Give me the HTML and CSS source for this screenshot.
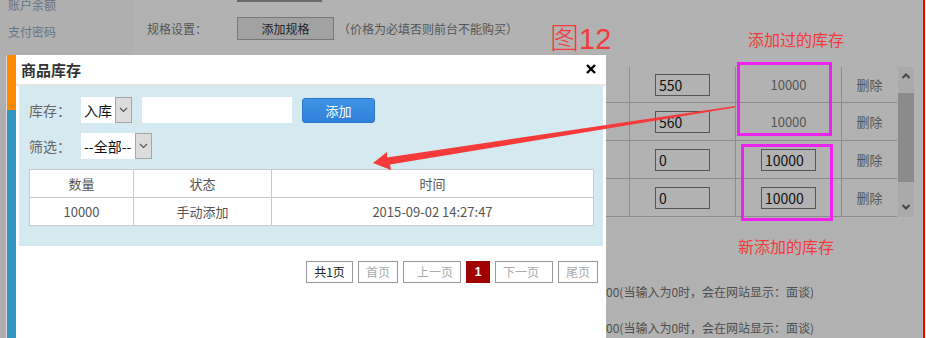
FILE: index.html
```html
<!DOCTYPE html>
<html lang="zh-CN">
<head>
    <meta charset="UTF-8">
    <title>商品库存</title>
    <link rel="stylesheet" href="styles.css">
</head>
<body>
    <div class="page">
        <!-- left menu -->
        <div class="sidebar">
            <div class="side-item side-first">账户余额</div>
            <div class="side-item">支付密码</div>
        </div>

        <!-- product edit form (dimmed behind the dialog) -->
        <div class="main">
            <div class="top-input"></div>
            <div class="spec-row">
                <span class="spec-label">规格设置：</span>
                <span class="spec-btn">添加规格</span>
                <span class="spec-note">（价格为必填否则前台不能购买）</span>
            </div>

            <div class="spec-wrap">
                <table class="spec-table">
                    <tr class="first">
                        <td class="c-name"></td>
                        <td class="c-price"><span class="field">550</span></td>
                        <td class="c-stock">10000</td>
                        <td class="c-del">删除</td>
                    </tr>
                    <tr>
                        <td class="c-name"></td>
                        <td class="c-price"><span class="field">560</span></td>
                        <td class="c-stock">10000</td>
                        <td class="c-del">删除</td>
                    </tr>
                    <tr>
                        <td class="c-name"></td>
                        <td class="c-price"><span class="field">0</span></td>
                        <td class="c-stock"><span class="field">10000</span></td>
                        <td class="c-del">删除</td>
                    </tr>
                    <tr>
                        <td class="c-name"></td>
                        <td class="c-price"><span class="field">0</span></td>
                        <td class="c-stock"><span class="field">10000</span></td>
                        <td class="c-del">删除</td>
                    </tr>
                </table>
                <div class="scrollbar">
                    <div class="sb-btn">
                        <svg width="16" height="18" viewBox="0 0 16 18"><path d="M4.5 11 L8 7.5 L11.5 11" fill="none" stroke="#444" stroke-width="2"/></svg>
                    </div>
                    <div class="sb-track"><div class="sb-thumb"></div></div>
                    <div class="sb-btn">
                        <svg width="16" height="17" viewBox="0 0 16 17"><path d="M4.5 6 L8 9.5 L11.5 6" fill="none" stroke="#444" stroke-width="2"/></svg>
                    </div>
                </div>
            </div>

            <div class="hint hint-first">00(当输入为0时，会在网站显示：面谈)</div>
            <div class="hint">00(当输入为0时，会在网站显示：面谈)</div>
        </div>
    </div>

    <!-- stock dialog -->
    <div class="modal">
        <div class="modal-strip"></div>
        <div class="modal-body">
            <div class="modal-head">
                <span class="modal-title">商品库存</span>
                <svg class="modal-close" width="10" height="10" viewBox="0 0 10 10"><path d="M1 1 L9 9 M9 1 L1 9" stroke="#000" stroke-width="2.4"/></svg>
            </div>
            <div class="panel">
                <div class="form-row">
                    <span class="form-label">库存：</span>
                    <span class="select sel-type">
                        <span class="sel-text">入库</span>
                        <span class="sel-arrow"><svg width="9" height="6" viewBox="0 0 9 6"><path d="M1 1 L4.5 4.5 L8 1" fill="none" stroke="#555" stroke-width="1.2"/></svg></span>
                    </span>
                    <span class="text-input"></span>
                    <span class="add-btn">添加</span>
                </div>
                <div class="form-row row-filter">
                    <span class="form-label">筛选：</span>
                    <span class="select sel-filter">
                        <span class="sel-text">--全部--</span>
                        <span class="sel-arrow"><svg width="9" height="6" viewBox="0 0 9 6"><path d="M1 1 L4.5 4.5 L8 1" fill="none" stroke="#555" stroke-width="1.2"/></svg></span>
                    </span>
                </div>
                <table class="log-table">
                    <tr>
                        <th class="l-qty">数量</th>
                        <th class="l-state">状态</th>
                        <th>时间</th>
                    </tr>
                    <tr>
                        <td>10000</td>
                        <td>手动添加</td>
                        <td>2015-09-02 14:27:47</td>
                    </tr>
                </table>
            </div>
            <div class="pager">
                <span class="pg pg-total">共1页</span>
                <span class="pg pg-2">首页</span>
                <span class="pg pg-prev">上一页</span>
                <span class="pg pg-cur">1</span>
                <span class="pg pg-next">下一页</span>
                <span class="pg pg-2">尾页</span>
            </div>
        </div>
    </div>

    <!-- screenshot annotations -->
    <div class="note-fig"><span class="fig-char">图</span>12</div>
    <div class="note-old">添加过的库存</div>
    <div class="note-new">新添加的库存</div>
    <div class="mark mark-old"></div>
    <div class="mark mark-new"></div>
    <svg class="arrow" width="926" height="338" viewBox="0 0 926 338">
        <polygon points="373,163 387,152 387,157.5 735,106 735,107.5 390,164.5 391,170" fill="#f53a3a"/>
    </svg>
</body>
</html>
```

FILE: styles.css
```css
body {
    margin: 0;
    width: 926px;
    height: 338px;
    overflow: hidden;
    position: relative;
    background: #fff;
    font-family: "Noto Sans CJK SC", "Liberation Sans", sans-serif;
    font-size: 12px;
    color: #555;
}
.page {
    display: flex;
    width: 925px;
    height: 338px;
    background: #b2b2b2;
}
.sidebar {
    width: 133px;
    background: #afafaf;
}
.side-item {
    height: 27px;
    line-height: 27px;
    padding-left: 8px;
    font-size: 12px;
    color: #647487;
}
.side-first {
    margin-top: -9px;
}
.main {
    flex: 1;
    border-right: 2px solid #f00;
}
.top-input {
    margin-left: 104px;
    width: 85px;
    height: 0;
    border-bottom: 2px solid #6a6a6a;
}
.spec-row {
    display: flex;
    align-items: center;
    margin-top: 15px;
    height: 23px;
    padding-left: 14px;
}
.spec-label {
    width: 90px;
    color: #555;
}
.spec-btn {
    width: 95px;
    height: 21px;
    line-height: 21px;
    text-align: center;
    background: #a2a2a2;
    border: 1px solid #787878;
    color: #222;
}
.spec-note {
    margin-left: 4px;
    color: #555;
}
.spec-wrap {
    display: flex;
    justify-content: flex-end;
    margin-top: 27px;
    margin-right: 9px;
}
.spec-table {
    border-collapse: collapse;
}
.spec-table td {
    height: 37px;
    padding: 0;
    border-left: 1px solid #8d8d8d;
    border-bottom: 1px solid #8d8d8d;
    text-align: center;
    font-size: 13px;
    color: #555;
}
.spec-table tr.first td {
    height: 35px;
}
.c-name { width: 200px; }
.c-price { width: 105px; }
.c-stock { width: 105px; }
.c-del { width: 55px; font-size: 12px; }
.field {
    display: inline-block;
    width: 50px;
    height: 20px;
    line-height: 20px;
    border: 1px solid #555;
    padding-left: 3px;
    text-align: left;
    font-size: 14px;
    color: #111;
    vertical-align: middle;
}
.scrollbar {
    width: 16px;
    margin-left: 1px;
    display: flex;
    flex-direction: column;
    background: #aaa;
}
.sb-btn {
    height: 18px;
    display: flex;
}
.sb-track {
    flex: 1;
    padding: 8px 0 0;
}
.sb-thumb {
    height: 89px;
    background: #8b8b8b;
}
.hint {
    height: 36px;
    line-height: 36px;
    padding-left: 473px;
    font-size: 12px;
    color: #4e4e4e;
}
.hint-first {
    margin-top: 57px;
}

/* dialog */
.modal {
    position: absolute;
    left: 6px;
    top: 55px;
    width: 599px;
    height: 290px;
    display: flex;
    background: #fff;
    border-left: 1px solid #dcdcdc;
}
.modal-strip {
    width: 9px;
    background: linear-gradient(#ff8a00 0, #ff8a00 55px, #3196bd 55px);
}
.modal-body {
    flex: 1;
}
.modal-head {
    height: 29px;
    display: flex;
    align-items: center;
    justify-content: space-between;
    padding: 0 10px 0 5px;
    border-bottom: 2px solid #e6e6e6;
}
.modal-title {
    font-size: 15px;
    font-weight: bold;
    color: #333;
}
.modal-close {
    margin-bottom: 2px;
}
.panel {
    margin: 0 3px;
    height: 149px;
    padding: 11px 0 0 10px;
    background: #d5e9f1;
}
.form-row {
    display: flex;
    align-items: center;
    height: 26px;
}
.row-filter {
    margin-top: 10px;
}
.form-label {
    width: 52px;
    font-size: 14px;
    color: #666;
}
.select {
    display: flex;
    height: 26px;
    background: #fff;
}
.sel-text {
    line-height: 26px;
    padding-left: 3px;
    font-size: 14px;
    color: #111;
}
.sel-type .sel-text { width: 31px; }
.sel-filter .sel-text { width: 51px; }
.sel-arrow {
    width: 15px;
    height: 24px;
    border: 1px solid #a6a6a6;
    background: #dcdcdc;
    display: flex;
    align-items: center;
    justify-content: center;
}
.text-input {
    width: 150px;
    height: 26px;
    margin-left: 10px;
    background: #fff;
}
.add-btn {
    width: 71px;
    height: 23px;
    line-height: 23px;
    margin-left: 10px;
    text-align: center;
    color: #fff;
    font-size: 13px;
    background: linear-gradient(#4094e6, #2f80d8);
    border: 1px solid #2b76c8;
    border-radius: 3px;
}
.log-table {
    margin-top: 10px;
    width: 565px;
    border-collapse: collapse;
    background: #fff;
}
.log-table th,
.log-table td {
    height: 27px;
    padding: 0;
    border: 1px solid #c9c9c9;
    font-weight: normal;
    font-size: 13px;
    color: #555;
    text-align: center;
}
.l-qty { width: 103px; }
.l-state { width: 137px; }
.pager {
    display: flex;
    justify-content: flex-end;
    gap: 5px;
    margin-top: 15px;
    padding-right: 8px;
}
.pg {
    height: 20px;
    line-height: 20px;
    border: 1px solid #999;
    font-size: 12px;
    color: #aaa;
    text-align: center;
}
.pg-total { width: 45px; color: #222; }
.pg-2 { width: 38px; }
.pg-prev { width: 50px; padding-left: 6px; }
.pg-next { width: 50px; padding-right: 6px; }
.pg-cur {
    width: 24px;
    height: 22px;
    line-height: 22px;
    border: none;
    background: #a00000;
    color: #fff;
    font-weight: bold;
    font-family: "Liberation Sans", sans-serif;
}

/* annotations drawn over the screenshot */
.note-fig {
    position: absolute;
    left: 550px;
    top: 17px;
    font-size: 29px;
    line-height: 38px;
    color: #f43a3a;
    font-family: "Liberation Sans", sans-serif;
}
.fig-char {
    font-family: "Noto Sans CJK SC", sans-serif;
    font-weight: 200;
}
.note-old,
.note-new {
    position: absolute;
    font-size: 16px;
    line-height: 20px;
    color: #f43a3a;
}
.note-old { left: 748px; top: 29px; }
.note-new { left: 738px; top: 236px; }
.mark {
    position: absolute;
    box-sizing: border-box;
    border: 3px solid #ee22ee;
}
.mark-old { left: 737px; top: 62px; width: 95px; height: 74px; }
.mark-new { left: 741px; top: 144px; width: 92px; height: 77px; }
.arrow {
    position: absolute;
    left: 0;
    top: 0;
    pointer-events: none;
}
```
